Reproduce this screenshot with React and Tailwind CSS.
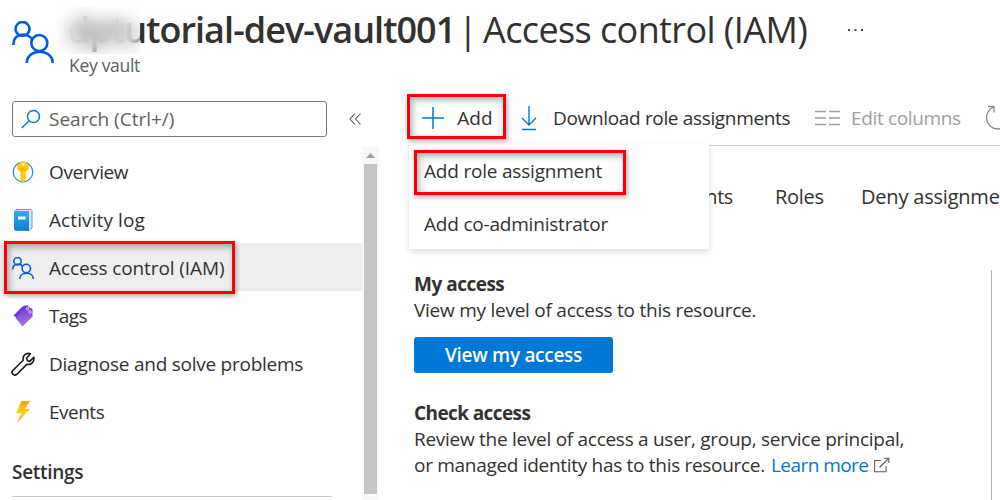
import React from "react";

function People({ size, stroke, className }) {
  return (
    <svg width={size} height={size} viewBox="0 0 42 42" fill="none" stroke="#015cda" strokeWidth={stroke} className={className}>
      <circle cx="10.500" cy="8" r="7" />
      <path d="M1.300 24C1.300 11 17 11.500 20.300 18.500" />
      <circle cx="27.300" cy="22" r="8" />
      <path d="M14.800 42C15 27 40.500 27 40.700 42" />
    </svg>
  );
}

function KeyIcon() {
  return (
    <svg width="22" height="22" viewBox="0 0 22 22">
      <circle cx="11" cy="11" r="9.800" fill="#fff" stroke="#2288dd" strokeWidth="1.200" />
      <path d="M8 1h6l3 3.500v3.200l-3.500 3.600v1.200l1 1-1 1.200 1 1.200-1 1.200v2.300L11 21.500l-2.500-2.100v-8.100L5 7.700V4.500z" fill="#ffc90e" />
      <circle cx="11" cy="3.500" r="1.400" fill="#fff" />
      <path d="M8 7.200h6M8 8.800h6" stroke="#f2a700" strokeWidth=".8" />
    </svg>
  );
}

function BookIcon() {
  return (
    <svg width="22" height="22" viewBox="0 0 22 22">
      <defs>
        <linearGradient id="book" x1="0" y1="0" x2="0" y2="1">
          <stop stopColor="#35b1ef" />
          <stop offset="1" stopColor="#0d7fd6" />
        </linearGradient>
      </defs>
      <path d="M4 .5h15l1 1v17.500l-3 2.500H4z" fill="#d7e8f4" stroke="#3b86bd" strokeWidth=".8" />
      <path d="M3.500 2H17v19.500H3.500Q2 21.500 2 20V3q0-2 2-2z" fill="url(#book)" />
      <path d="M6 7.500h7.500v3H6z" fill="#fff" />
    </svg>
  );
}

function TagIcon() {
  return (
    <svg width="22" height="22" viewBox="0 0 22 22">
      <defs>
        <linearGradient id="tag" x1="0" y1="0" x2="0" y2="1">
          <stop stopColor="#7438dc" />
          <stop offset="1" stopColor="#a779dc" />
        </linearGradient>
      </defs>
      <path d="M.5 10.500 9.500 1.500 12 .5h4L5 14z" fill="#7434dc" />
      <path d="M2.500 13 13.500 2.500 16 2l3.500 2v7.500L9.500 21.500z" fill="url(#tag)" />
      <circle cx="14.500" cy="3.800" r="1.300" fill="none" stroke="#fff" strokeWidth=".8" />
      <circle cx="17" cy="7" r="1.300" fill="none" stroke="#e4d4fa" strokeWidth=".8" />
    </svg>
  );
}

function WrenchIcon() {
  return (
    <svg width="24" height="24" viewBox="0 0 24 24" fill="none" stroke="#161616" strokeWidth="1.600" strokeLinejoin="round">
      <path d="M19.500 1.800c-4.300-1.500-8.300 1.800-7.300 6.500L2 18.200c-2.700 3 1.300 6.500 4 4l9.800-9.800c4.300.8 8-2.600 7-7.200l-4 4.200-2.300-.6-.9-2.800z" />
    </svg>
  );
}

function BoltIcon() {
  return (
    <svg width="22" height="22" viewBox="0 0 22 22">
      <defs>
        <linearGradient id="bolt" x1="0" y1="0" x2="0" y2="1">
          <stop stopColor="#ff9c13" />
          <stop offset=".55" stopColor="#ffd71a" />
          <stop offset="1" stopColor="#f9a21a" />
        </linearGradient>
      </defs>
      <path d="M9.500 0h8.700L12.500 8H18L5 21.700l4.200-9.500H4z" fill="url(#bolt)" />
    </svg>
  );
}

function Highlight({ className }) {
  return (
    <span className={`pointer-events-none absolute z-20 border-3 border-[#fb0007] shadow-[1px_2px_5px_rgba(0,0,0,0.35),inset_2px_3px_7px_rgba(0,0,0,0.32)] ${className}`} />
  );
}

function NavItem({ icon, label, spacing, active, children }) {
  return (
    <a className={`relative flex h-12 shrink-0 items-center pt-[2px] pl-[11px] ${active ? "bg-[#eeeeee]" : ""}`}>
      <span className="flex w-[38px] items-center">{icon}</span>
      <span className={spacing}>{label}</span>
      {children}
    </a>
  );
}

export default function App() {
  return (
    <div className="flex h-[500px] w-[1000px] flex-col overflow-hidden bg-white font-['Open_Sans',sans-serif] text-[19px] leading-[26px] whitespace-nowrap text-[#323130]">
      <header className="flex h-[94px] shrink-0 pl-3">
        <People size={42} stroke={2.6} className="mt-[21px] shrink-0" />
        <div className="relative ml-[14px] flex flex-col">
          <h1 className="mt-[7px] flex h-[45px] items-center text-[36px] leading-[46px]">
            <span className="w-[385px] font-semibold tracking-[-0.95px]">dptutorial-dev-vault001</span>
            <span className="ml-[5px] w-[25px]">|</span>
            <span className="tracking-[-0.6px]">Access control (IAM)</span>
          </h1>
          <span className="absolute top-[7px] left-[-12px] h-[47px] w-[84px] bg-white/30 backdrop-blur-[9px]" />
          <p className="ml-px text-[17.500px] tracking-[-0.3px] text-[#605e5c]">Key vault</p>
        </div>
        <svg width="20" height="6" viewBox="0 0 20 6" className="mt-[27px] ml-[39px]" fill="#444">
          <path d="M2 2h2v2H2zM8.500 2h2v2h-2zM15 2h2v2h-2z" />
        </svg>
      </header>

      <div className="flex min-h-0 flex-1">
        <aside className="flex w-[379px] shrink-0 flex-col">
          <div className="flex h-[53px] shrink-0 items-start pt-[7px] pl-3">
            <div className="flex h-9 w-[315px] items-center rounded-[3px] border border-[#7a7977] pl-2">
              <svg width="20" height="20" viewBox="0 0 20 20" fill="none" stroke="#0078d4" strokeWidth="1.400">
                <circle cx="12.500" cy="7.500" r="6" />
                <path d="M8.200 11.800.8 19" />
              </svg>
              <span className="ml-2 text-[#605e5c]">Search (Ctrl+/)</span>
            </div>
            <svg width="14" height="14" viewBox="0 0 14 14" className="mt-[11px] ml-[22px]" fill="none" stroke="#605e5c" strokeWidth="1.100">
              <path d="M6 1.500 1 7l5 5.500M11.500 1.500 6.500 7l5 5.500" />
            </svg>
          </div>
          <div className="flex min-h-0 flex-1">
            <nav className="flex w-[362px] flex-col">
              <NavItem icon={<span className="ml-px"><KeyIcon /></span>} label="Overview" spacing="tracking-[-0.4px]" />
              <NavItem icon={<span className="ml-px"><BookIcon /></span>} label="Activity log" spacing="tracking-[0.1px]" />
              <NavItem icon={<span className="ml-px"><People size={22} stroke={3} /></span>} label="Access control (IAM)" spacing="tracking-[-0.1px]" active>
                <Highlight className="-top-[2px] left-1 h-[53px] w-[231px]" />
              </NavItem>
              <NavItem icon={<span className="ml-[2px]"><TagIcon /></span>} label="Tags" spacing="tracking-[-0.6px]" />
              <NavItem icon={<WrenchIcon />} label="Diagnose and solve problems" spacing="tracking-[-0.25px]" />
              <NavItem icon={<span className="ml-px"><BoltIcon /></span>} label="Events" spacing="tracking-[-0.5px]" />
              <h2 className="mx-3 mr-[30px] mt-[24px] h-[38px] shrink-0 border-b border-[#c8c8c8] font-semibold tracking-[-0.3px]">Settings</h2>
            </nav>
            <div className="flex w-[17px] flex-col items-center bg-[#f7f7f7]">
              <svg width="9" height="5" viewBox="0 0 9 5" className="mt-[6px] shrink-0" fill="#a0a0a0">
                <path d="M4.500 0 9 5H0z" />
              </svg>
              <span className="mt-[6px] mr-px h-[330px] w-[13px] shrink-0 bg-[#c5c5c5]" />
            </div>
          </div>
        </aside>

        <main className="relative ml-[29px] flex min-w-0 flex-1 flex-col">
          <div className="flex h-[52px] shrink-0 items-center border-b border-[#d2d0ce] pb-[3px]">
            <button className="relative ml-[13px] flex items-center">
              <svg width="24" height="24" viewBox="0 0 24 24" stroke="#0078d4" strokeWidth="1.500">
                <path d="M12 1v22M1 12h22" />
              </svg>
              <span className="ml-3 w-9">Add</span>
              <Highlight className="-top-[11px] left-[-14px] h-[45px] w-[99px]" />
            </button>
            <button className="ml-[27px] flex items-center">
              <svg width="18" height="26" viewBox="0 0 18 26" fill="none" stroke="#0078d4" strokeWidth="1.400">
                <path d="M9 1v19M2 13l7 7 7-7M2 24.500h14" />
              </svg>
              <span className="ml-[15px] w-[238px] text-left tracking-[-0.34px]">Download role assignments</span>
            </button>
            <button className="ml-6 flex items-center text-[#a19f9d]">
              <svg width="25" height="16" viewBox="0 0 25 16" stroke="currentColor" strokeWidth="1.500">
                <path d="M0 1.500h11M14 1.500h11M0 8h11M14 8h11M0 14.500h11M14 14.500h11" />
              </svg>
              <span className="ml-[11px] w-[111px] text-left tracking-[-0.36px]">Edit columns</span>
            </button>
            <svg width="27" height="28" viewBox="0 0 27 28" className="ml-[23px] shrink-0" fill="none" stroke="#8a8886" strokeWidth="1.300">
              <path d="M3 2.500h6V8.500M8.700 3C-3 8 .5 25 13 25c14 0 16-18 5-22" />
            </svg>
          </div>

          <div className="flex h-[124px] shrink-0 items-start pt-[38px] text-[20px]">
            <span className="ml-[165px] w-[160px] shrink-0 text-right tracking-[-0.4px]">Role assignments</span>
            <span className="ml-[42px] w-[86px] shrink-0 tracking-[-0.3px]">Roles</span>
            <span className="shrink-0 tracking-[-0.2px]">Deny assignments</span>
          </div>

          <section className="flex h-[230px] w-[584px] shrink-0 flex-col items-start border-r border-[#b3b0ad] pl-[6px]">
            <h3 className="mt-px font-bold tracking-[-0.5px]">My access</h3>
            <p className="tracking-[-0.25px]">View my level of access to this resource.</p>
            <button className="mt-[14px] h-9 w-[199px] rounded-[3px] bg-[#0078d7] font-semibold tracking-[-0.3px] text-white">View my access</button>
            <h3 className="mt-[27px] font-bold tracking-[-0.6px]">Check access</h3>
            <p className="tracking-[-0.28px]">Review the level of access a user, group, service principal,</p>
            <p className="flex items-center tracking-[-0.3px]">
              <span className="w-[351px]">or managed identity has to this resource.</span>
              <a className="ml-[6px] w-[98px] tracking-[-0.55px] text-[#0078d7]">Learn more</a>
              <svg width="16" height="16" viewBox="0 0 16 16" className="ml-[5px]" fill="none" stroke="#605e5c" strokeWidth="1.100">
                <path d="M7 3.500H.6v11.300h11.500V9M5.500 10.500 14.500 1.500M10 1.200h4.800V6" />
              </svg>
            </p>
          </section>

          <div className="absolute top-[50px] left-px z-10 flex h-[105px] w-[300px] flex-col bg-white pl-[15px] shadow-[0_3px_6px_rgba(0,0,0,0.13)]">
            <a className="relative mt-[14px] self-start tracking-[-0.2px]">
              Add role assignment
              <Highlight className="-top-[8px] left-[-10px] h-[45px] w-[212px]" />
            </a>
            <a className="mt-[27px] self-start tracking-[-0.2px]">Add co-administrator</a>
          </div>
        </main>
      </div>
    </div>
  );
}
